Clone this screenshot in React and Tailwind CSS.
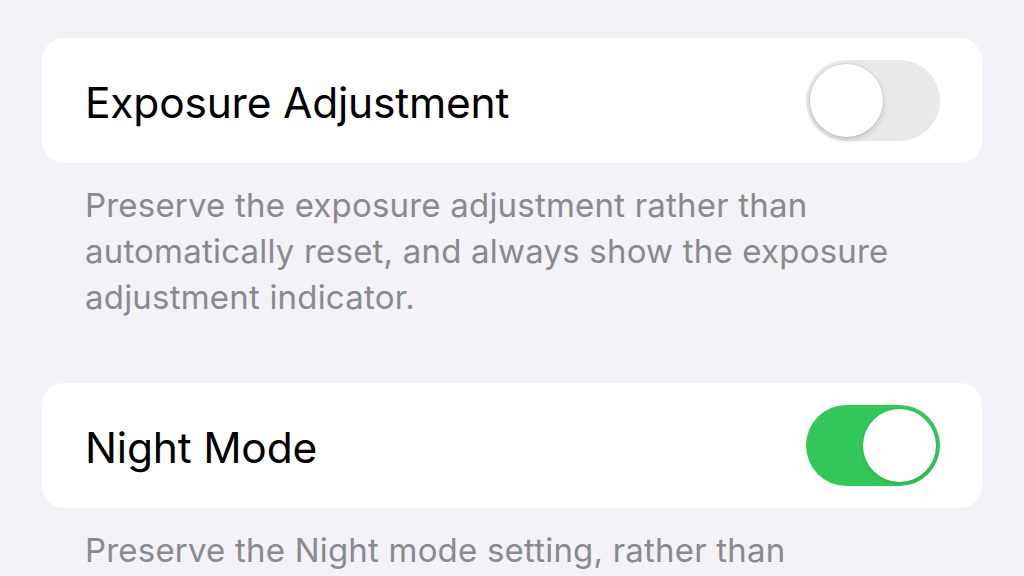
function Toggle({ on }) {
  return (
    <div
      className={`relative h-[81px] w-[134px] shrink-0 rounded-full ${
        on ? "bg-[#34c759]" : "bg-[#e9e9eb]"
      }`}
    >
      <div
        className={`absolute top-[4px] h-[73px] w-[73px] rounded-full bg-white ${
          on
            ? "right-[4px] shadow-[0_2px_4px_rgba(0,0,0,0.12)]"
            : "left-[4px] shadow-[0_0_0_1px_rgba(0,0,0,0.06),0_3px_6px_rgba(0,0,0,0.15)]"
        }`}
      />
    </div>
  );
}

function Section({ title, on, children }) {
  return (
    <div>
      <div className="flex h-[125px] items-center justify-between rounded-[22px] bg-white pl-[43px] pr-[42px]">
        <span className="pt-[4px] text-[42.5px] tracking-[-0.2px] text-black">{title}</span>
        <Toggle on={on} />
      </div>
      <p className="pl-[43px] pr-[40px] pt-[19px] text-[33px] leading-[46px] tracking-[0.2px] text-[#8a8a8e]">
        {children}
      </p>
    </div>
  );
}

export default function App() {
  return (
    <div
      className="h-[576px] w-[1024px] overflow-hidden bg-[#f2f2f7] px-[42px] pt-[38px]"
      style={{ fontFamily: "Inter, 'Liberation Sans', sans-serif" }}
    >
      <div className="flex flex-col gap-[63px]">
        <Section title="Exposure Adjustment" on={false}>
          Preserve the exposure adjustment rather than
          <br />
          automatically reset, and always show the exposure
          <br />
          adjustment indicator.
        </Section>
        <Section title="Night Mode" on={true}>
          Preserve the Night mode setting, rather than
          <br />
          automatically reset.
        </Section>
      </div>
    </div>
  );
}
